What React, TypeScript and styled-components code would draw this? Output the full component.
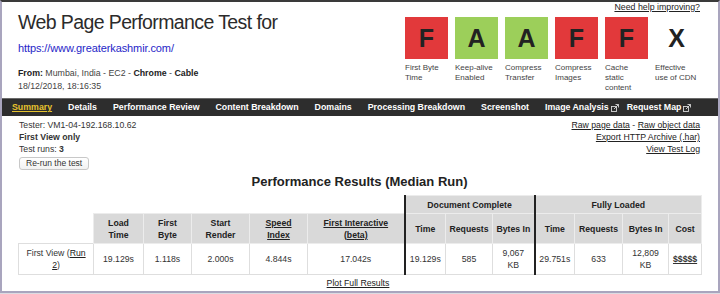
import React from "react";
import styled, { createGlobalStyle } from "styled-components";

const Global = createGlobalStyle`
  html, body { margin: 0; padding: 0; background: #dcdce2; }
  body { font-family: "Liberation Sans", Arial, Helvetica, sans-serif; color: #222; }
  * { box-sizing: border-box; }
`;

const Frame = styled.div`
  width: 720px;
  height: 293px;
  background: #fff;
  border-top: 2px solid #3a3a3a;
  border-left: 2px solid #a9a5be;
  border-right: 2px solid #a9a5be;
  border-bottom: 2px solid #a9a5be;
  display: flex;
  flex-direction: column;
  overflow: hidden;
`;

const Header = styled.header`
  display: flex;
  justify-content: space-between;
  height: 96px;
`;

const HeadLeft = styled.div`
  padding: 9px 0 0 16px;
  display: flex;
  flex-direction: column;
`;

const Title = styled.h1`
  margin: 0;
  font-size: 19.5px;
  line-height: 22px;
  font-weight: normal;
  letter-spacing: -0.6px;
  color: #2b2b2b;
`;

const SiteLink = styled.a`
  margin-top: 9px;
  font-size: 11px;
  line-height: 13px;
  color: #2626c8;
  text-decoration: none;
  letter-spacing: -0.1px;
`;

const Meta = styled.div`
  margin-top: 12px;
  font-size: 8.8px;
  line-height: 12.5px;
  color: #444;
  b { color: #222; }
`;

const HeadRight = styled.div`
  padding: 0 18px 0 0;
  display: flex;
  flex-direction: column;
  align-items: flex-end;
`;

const HelpLink = styled.a`
  font-size: 8.8px;
  line-height: 11px;
  color: #222;
  text-decoration: underline;
`;

const Grades = styled.div`
  display: flex;
  gap: 7px;
  margin-top: 4px;
  margin-right: 2px;
`;

const Grade = styled.div`
  width: 43px;
  display: flex;
  flex-direction: column;
`;

const GradeBox = styled.div<{ $tone: "bad" | "good" | "none" }>`
  width: 43px;
  height: 42px;
  display: flex;
  align-items: center;
  justify-content: center;
  font-size: 25px;
  font-weight: bold;
  color: #222;
  background: ${(p) =>
    p.$tone === "bad" ? "#e2393b" : p.$tone === "good" ? "#9ccf5a" : "transparent"};
`;

const GradeLabel = styled.div`
  margin-top: 4px;
  font-size: 8px;
  line-height: 10px;
  color: #444;
  white-space: nowrap;
`;

const Nav = styled.nav`
  height: 18px;
  background: #2d2d2d;
  border-top: 1px solid #6a6a6a;
  display: flex;
  align-items: center;
  padding-left: 2px;
`;

const NavItem = styled.a<{ $active?: boolean; $ext?: boolean }>`
  font-size: 8.8px;
  font-weight: bold;
  line-height: 17px;
  padding: 0 ${(p) => (p.$ext ? "0" : "8px")} 0 8px;
  color: ${(p) => (p.$active ? "#e6c22e" : "#fff")};
  text-decoration: ${(p) => (p.$active ? "underline" : "none")};
  white-space: nowrap;
  display: flex;
  align-items: center;
  gap: 2px;
`;

const Content = styled.main`
  padding: 0 18px 0 17px;
  display: flex;
  flex-direction: column;
`;

const InfoRow = styled.div`
  display: flex;
  justify-content: space-between;
  padding-top: 3px;
`;

const InfoLeft = styled.div`
  display: flex;
  flex-direction: column;
  align-items: flex-start;
  font-size: 8.7px;
  line-height: 12px;
  color: #333;
`;

const InfoRight = styled.div`
  display: flex;
  flex-direction: column;
  align-items: flex-end;
  font-size: 8.7px;
  line-height: 12px;
  color: #333;
`;

const UL = styled.a`
  color: #222;
  text-decoration: underline;
`;

const Button = styled.button`
  margin-top: 2px;
  height: 13px;
  padding: 0 6px;
  font-family: inherit;
  font-size: 8.5px;
  line-height: 11px;
  color: #333;
  background: linear-gradient(#fff, #f2f2f2);
  border: 1px solid #c8c8c8;
  border-radius: 3px;
`;

const ResultsTitle = styled.h2`
  margin: 4px 0 0;
  text-align: center;
  font-size: 13px;
  line-height: 15px;
  font-weight: bold;
  color: #222;
`;

const Table = styled.table`
  margin: 6px 0 0 -1px;
  width: 683px;
  border-collapse: collapse;
  table-layout: fixed;
  font-size: 8.7px;
  color: #333;
`;

const Th = styled.th<{ $blank?: boolean; $group?: boolean }>`
  font-weight: bold;
  color: #222;
  text-align: center;
  line-height: 12px;
  padding: 0 2px;
  background: ${(p) => (p.$blank ? "#fff" : "#d9d9d9")};
  border: ${(p) => (p.$blank ? "none" : "1px solid #ececec")};
  ${(p) => (p.$group ? "border-left: 2px solid #222;" : "")}
  a { color: #222; text-decoration: underline; }
`;

const Td = styled.td<{ $group?: boolean }>`
  text-align: center;
  line-height: 12px;
  padding: 0 2px;
  border: 1px solid #dedede;
  ${(p) => (p.$group ? "border-left: 2px solid #222;" : "")}
  a { color: #222; text-decoration: underline; }
`;

const GroupRow = styled.tr`
  height: 18px;
`;

const HeadRow = styled.tr`
  height: 30px;
`;

const DataRow = styled.tr`
  height: 31px;
`;

const Cost = styled.a`
  font-weight: bold;
  color: #333 !important;
`;

const PlotLink = styled.a`
  margin-top: 3px;
  align-self: center;
  font-size: 8.7px;
  line-height: 11px;
  color: #222;
  text-decoration: underline;
  margin-left: -3px;
`;

const ExtIcon = () => (
  <svg width="8" height="8" viewBox="0 0 8 8" fill="none" stroke="#d8d8d8" strokeWidth="0.9">
    <rect x="0.5" y="2.5" width="5" height="5" />
    <path d="M3 5 L7.5 0.5 M4.5 0.5 H7.5 V3.5" />
  </svg>
);

const cols = [75, 50, 48, 58, 58, 97, 41, 47, 42, 40, 48, 46, 33];

export default function App() {
  return (
    <>
      <Global />
      <Frame>
        <Header>
          <HeadLeft>
            <Title>Web Page Performance Test for</Title>
            <SiteLink>https://www.greaterkashmir.com/</SiteLink>
            <Meta>
              <b>From:</b> Mumbai, India - EC2 - <b>Chrome</b> - <b>Cable</b>
              <br />
              18/12/2018, 18:16:35
            </Meta>
          </HeadLeft>
          <HeadRight>
            <HelpLink>Need help improving?</HelpLink>
            <Grades>
              <Grade>
                <GradeBox $tone="bad">F</GradeBox>
                <GradeLabel>First Byte<br />Time</GradeLabel>
              </Grade>
              <Grade>
                <GradeBox $tone="good">A</GradeBox>
                <GradeLabel>Keep-alive<br />Enabled</GradeLabel>
              </Grade>
              <Grade>
                <GradeBox $tone="good">A</GradeBox>
                <GradeLabel>Compress<br />Transfer</GradeLabel>
              </Grade>
              <Grade>
                <GradeBox $tone="bad">F</GradeBox>
                <GradeLabel>Compress<br />Images</GradeLabel>
              </Grade>
              <Grade>
                <GradeBox $tone="bad">F</GradeBox>
                <GradeLabel>Cache<br />static<br />content</GradeLabel>
              </Grade>
              <Grade>
                <GradeBox $tone="none">X</GradeBox>
                <GradeLabel>Effective<br />use of CDN</GradeLabel>
              </Grade>
            </Grades>
          </HeadRight>
        </Header>
        <Nav>
          <NavItem $active>Summary</NavItem>
          <NavItem>Details</NavItem>
          <NavItem>Performance Review</NavItem>
          <NavItem>Content Breakdown</NavItem>
          <NavItem>Domains</NavItem>
          <NavItem>Processing Breakdown</NavItem>
          <NavItem>Screenshot</NavItem>
          <NavItem $ext>Image Analysis <ExtIcon /></NavItem>
          <NavItem $ext>Request Map <ExtIcon /></NavItem>
        </Nav>
        <Content>
          <InfoRow>
            <InfoLeft>
              <span>Tester: VM1-04-192.168.10.62</span>
              <b>First View only</b>
              <span>Test runs: <b>3</b></span>
              <Button>Re-run the test</Button>
            </InfoLeft>
            <InfoRight>
              <span><UL>Raw page data</UL> - <UL>Raw object data</UL></span>
              <UL>Export HTTP Archive (.har)</UL>
              <UL>View Test Log</UL>
            </InfoRight>
          </InfoRow>
          <ResultsTitle>Performance Results (Median Run)</ResultsTitle>
          <Table>
            <colgroup>
              {cols.map((w, i) => (
                <col key={i} style={{ width: w }} />
              ))}
            </colgroup>
            <thead>
              <GroupRow>
                <Th $blank colSpan={6}></Th>
                <Th $group colSpan={3}>Document Complete</Th>
                <Th $group colSpan={4}>Fully Loaded</Th>
              </GroupRow>
              <HeadRow>
                <Th $blank></Th>
                <Th>Load<br />Time</Th>
                <Th>First<br />Byte</Th>
                <Th>Start<br />Render</Th>
                <Th><a>Speed<br />Index</a></Th>
                <Th><a>First Interactive<br />(beta)</a></Th>
                <Th $group>Time</Th>
                <Th>Requests</Th>
                <Th>Bytes In</Th>
                <Th $group>Time</Th>
                <Th>Requests</Th>
                <Th>Bytes In</Th>
                <Th>Cost</Th>
              </HeadRow>
            </thead>
            <tbody>
              <DataRow>
                <Td>First View (<a>Run<br />2</a>)</Td>
                <Td>19.129s</Td>
                <Td>1.118s</Td>
                <Td>2.000s</Td>
                <Td>4.844s</Td>
                <Td>17.042s</Td>
                <Td $group>19.129s</Td>
                <Td>585</Td>
                <Td>9,067<br />KB</Td>
                <Td $group>29.751s</Td>
                <Td>633</Td>
                <Td>12,809<br />KB</Td>
                <Td><Cost>$$$$$</Cost></Td>
              </DataRow>
            </tbody>
          </Table>
          <PlotLink>Plot Full Results</PlotLink>
        </Content>
      </Frame>
    </>
  );
}
